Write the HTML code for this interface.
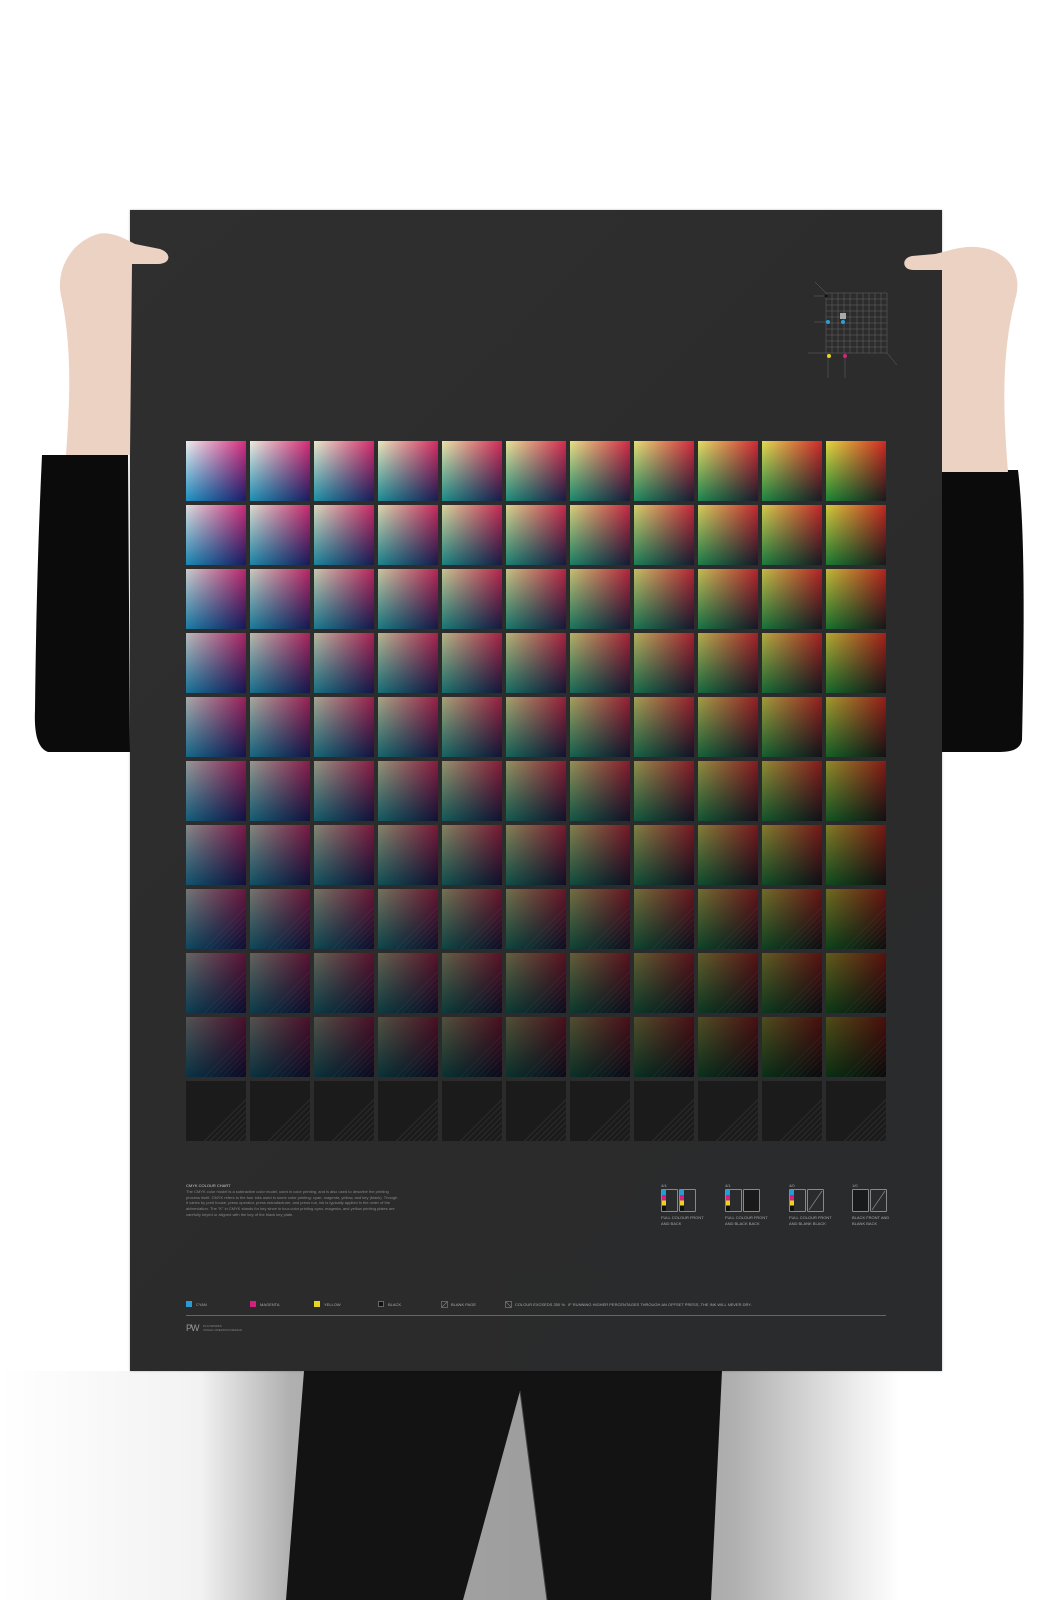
<!DOCTYPE html>
<html><head><meta charset="utf-8">
<style>
*{margin:0;padding:0;box-sizing:border-box}
body{width:1060px;height:1600px;background:#fff;position:relative;overflow:hidden;font-family:"Liberation Sans",sans-serif}
.abs{position:absolute}
#floor{left:0;top:1371px;width:1060px;height:229px;background:linear-gradient(to right,#fff 0px,#f2f2f2 200px,#b0b0b0 290px,#a2a2a2 400px,#9e9e9e 530px,#a2a2a2 660px,#b0b0b0 735px,#eeeeee 860px,#fff 900px)}
#poster{left:130px;top:210px;width:812px;height:1161px;background:linear-gradient(135deg,#2f2f2f,#2b2b2b 60%,#2a2b2c);box-shadow:0 0 2px rgba(0,0,0,.3)}
.sw{position:absolute;width:60px;height:60px;background-blend-mode:multiply}
.blk{background:#1b1b1b}
.hat{position:absolute;left:0;top:0;width:60px;height:60px;clip-path:polygon(100% 25%,100% 100%,25% 100%);background:repeating-linear-gradient(135deg,transparent 0 3px,rgba(255,255,255,.07) 3px 4px)}
.t{position:absolute;color:#aaa;font-size:4px;line-height:5.7px;white-space:nowrap}
.pg{position:absolute;width:17px;height:23px;border:1px solid #888;border-radius:1px}
</style></head><body>
<div id="floor" class="abs"></div>
<svg class="abs" style="left:0;top:1371px" width="1060" height="229">
<path d="M304,0 L518,0 L520,0 L722,0 L711,229 L547,229 L520,20 L463,229 L286,229 Z" fill="#131313"/>
<path d="M520,20 L547,229" stroke="#444" stroke-width="1" fill="none"/>
</svg>
<div id="poster" class="abs"></div>
<div id="grid"></div>
<svg class="abs" style="left:780px;top:270px" width="120" height="110">
<g stroke="#666" stroke-width="0.5" fill="none">
<path d="M46,23h61v60h-61z"/>
<path d="M52,23v60M58,23v60M64,23v60M70,23v60M77,23v60M83,23v60M89,23v60M95,23v60M101,23v60M46,29h61M46,35h61M46,41h61M46,47h61M46,53h61M46,59h61M46,65h61M46,71h61M46,77h61"/>
<path d="M46,23L35,12M107,83L117,95M46,83h-18M46,52h-12M46,26h-12M48,83v25M65,83v25"/>
</g>
<rect x="60" y="43" width="6" height="6" fill="#aaa"/>
<circle cx="63" cy="52" r="2" fill="#2aa0d8"/><circle cx="48" cy="52" r="2" fill="#2aa0d8"/>
<circle cx="49" cy="86" r="2" fill="#e8d820"/><circle cx="65" cy="86" r="2" fill="#d8207e"/>
<circle cx="46" cy="26" r="1.5" fill="#111"/>
</svg>
<div class="t" style="left:186px;top:1183px;color:#ccc">CMYK COLOUR CHART</div>
<div class="t" style="left:186px;top:1189px;color:#888">The CMYK color model is a subtractive color model, used in color printing, and is also used to describe the printing<br>process itself. CMYK refers to the four inks used in some color printing: cyan, magenta, yellow, and key (black). Though<br>it varies by print house, press operator, press manufacturer, and press run, ink is typically applied in the order of the<br>abbreviation. The "K" in CMYK stands for key since in four-color printing cyan, magenta, and yellow printing plates are<br>carefully keyed or aligned with the key of the black key plate.</div>
<div id="icons"></div>
<div class="abs" style="left:186px;top:1301px;width:6px;height:6px;background:#2a9ad6"></div><div class="t" style="left:196px;top:1302px">CYAN</div>
<div class="abs" style="left:250px;top:1301px;width:6px;height:6px;background:#d6207e"></div><div class="t" style="left:260px;top:1302px">MAGENTA</div>
<div class="abs" style="left:314px;top:1301px;width:6px;height:6px;background:#e6d820"></div><div class="t" style="left:324px;top:1302px">YELLOW</div>
<div class="abs" style="left:378px;top:1301px;width:6px;height:6px;background:#111;border:1px solid #666"></div><div class="t" style="left:388px;top:1302px">BLACK</div>
<svg class="abs" style="left:441px;top:1301px" width="7" height="7"><rect x=".5" y=".5" width="6" height="6" fill="none" stroke="#888" stroke-width=".6"/><path d="M1,6L6,1" stroke="#888" stroke-width=".6"/></svg><div class="t" style="left:451px;top:1302px">BLANK PAGE</div>
<svg class="abs" style="left:505px;top:1301px" width="7" height="7"><rect x=".5" y=".5" width="6" height="6" fill="none" stroke="#888" stroke-width=".6"/><path d="M1,1L6,6" stroke="#888" stroke-width=".6"/></svg><div class="t" style="left:515px;top:1302px">COLOUR EXCEEDS 250 %.&nbsp; IF RUNNING HIGHER PERCENTAGES THROUGH AN OFFSET PRESS, THE INK WILL NEVER DRY.</div>
<div class="abs" style="left:186px;top:1315px;width:700px;height:1px;background:#666"></div>
<div class="t" style="left:186px;top:1324px;font-size:9px;line-height:9px;color:#999;letter-spacing:-1px">PW</div>
<div class="t" style="left:203px;top:1325px;font-size:3px;line-height:3.5px;color:#888">PLAYWORKS<br>VISUAL CREATION DESIGN</div>
<svg class="abs" style="left:0;top:0" width="1060" height="800">
<path d="M42,455 L128,455 L130,752 L48,752 C38,748 34,735 35,710 C36,620 38,540 42,455 Z" fill="#0b0b0b"/>
<path d="M62,300 C54,272 70,242 98,234 C110,231 124,238 135,244 L160,249 C172,253 171,264 158,264 L132,264 L130,455 L66,455 C70,400 72,350 62,300 Z" fill="#ecd2c2"/>
<path d="M950,470 L1018,470 C1024,520 1025,600 1022,740 C1020,750 1010,752 1000,752 L942,752 L942,470 Z" fill="#0b0b0b"/>
<path d="M1015,300 C1025,268 1002,248 975,247 C960,246 945,252 935,254 L912,256 C901,258 902,270 913,270 L942,270 L942,472 L1008,472 C1004,420 1000,360 1015,300 Z" fill="#ecd2c2"/>
</svg>
<script>
(function(){
var g=document.getElementById('grid'),h='';
var C=[30,150,200],M=[225,45,130],Y=[245,232,70];
function mix(a,t){return 'rgb('+a.map(function(v){return Math.round(255-(255-v)*t)}).join(',')+')';}
for(var r=0;r<11;r++){for(var c=0;c<11;c++){
var x=186+c*64,y=441+r*64;
if(r==10){h+='<div class="sw blk" style="left:'+x+'px;top:'+y+'px"><div class="hat"></div></div>';continue;}
var k=Math.round(255*(1-0.072*r));
var yc=mix(Y,c/10);
h+='<div class="sw" style="left:'+x+'px;top:'+y+'px;background-image:linear-gradient(to right,#f6f6f6,rgb('+M+')),linear-gradient(to bottom,#f6f6f6,rgb('+C+')),linear-gradient('+yc+','+yc+'),linear-gradient(rgb('+k+','+k+','+k+'),rgb('+k+','+k+','+k+'))">'+(r>=7?'<div class="hat" style="opacity:.6"></div>':'')+'</div>';
}}
g.innerHTML=h;
var ic=document.getElementById('icons'),s='';
var xs=[661,725,789,852],lab=['4/4','4/1','4/0','1/0'],l1=['FULL COLOUR FRONT','FULL COLOUR FRONT','FULL COLOUR FRONT','BLACK FRONT AND'],l2=['AND BACK','AND BLACK BACK','AND BLANK BLACK','BLANK BACK'];
for(var i=0;i<4;i++){var x=xs[i];
s+='<div class="t" style="left:'+x+'px;top:1183px">'+lab[i]+'</div>';
for(var p=0;p<2;p++){var px=x+p*18;
var full=(i==0)||(p==0&&i<3);
s+='<div class="pg" style="left:'+px+'px;top:1189px;background:'+((i==1&&p==1)||(i==3&&p==0)?'#1a1a1a':'transparent')+'"></div>';
if(full){s+='<div class="abs" style="left:'+(px+1)+'px;top:1190px;width:4px;height:21px;background:linear-gradient(#2a9ad6 0 25%,#d6207e 25% 50%,#e6d820 50% 75%,#111 75%)"></div>';}
if((i==2||i==3)&&p==1){s+='<svg class="abs" style="left:'+px+'px;top:1189px" width="17" height="23"><path d="M2,21L15,2" stroke="#888" stroke-width=".7"/></svg>';}
}
s+='<div class="t" style="left:'+x+'px;top:1215px">'+l1[i]+'<br>'+l2[i]+'</div>';
}
ic.innerHTML=s;
})();
</script>
</body></html>
